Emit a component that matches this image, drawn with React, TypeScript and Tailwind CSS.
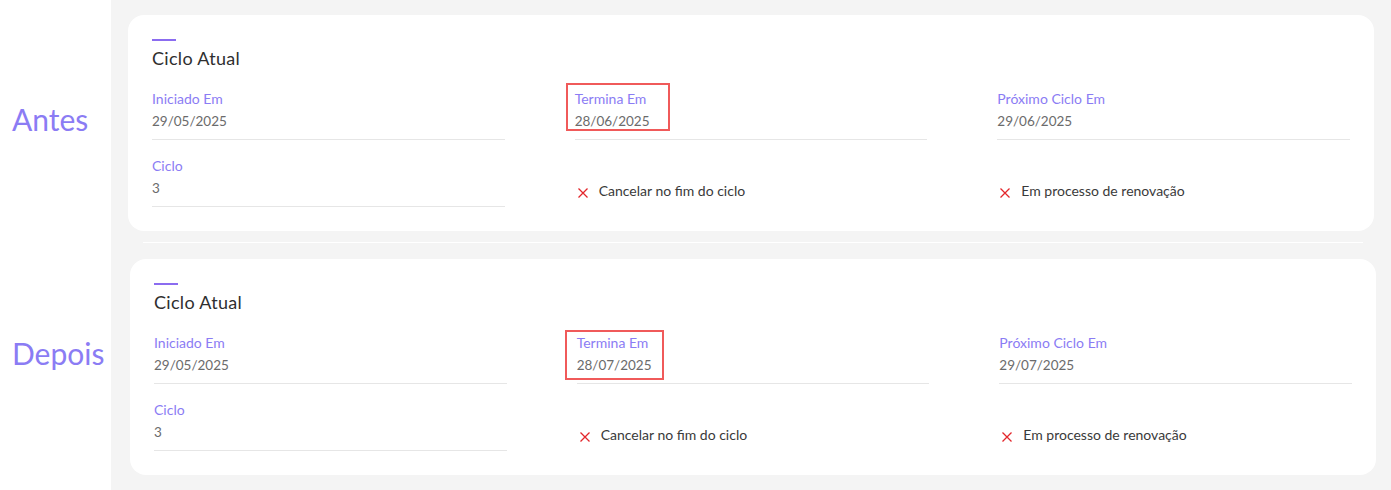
import { FC, ReactNode } from 'react'

const font = { fontFamily: 'Lato, "Open Sans", sans-serif' }

type Box = { left: number; top: number; width: number; height: number }

const Field: FC<{ label: string; value: string; box?: Box }> = ({ label, value, box }) => (
  <div className="relative border-b border-[#e6e6e6] pb-[9px]">
    <div className="text-[14px] leading-[18px] text-[#8b7cf4]">{label}</div>
    <div className="mt-[4px] text-[13.5px] leading-[18px] text-[#6b6b6b]">{value}</div>
    {box && (
      <div
        className="absolute border-2 border-[#f05a5a]"
        style={{ left: box.left, top: box.top, width: box.width, height: box.height }}
      />
    )}
  </div>
)

const Flag: FC<{ children: ReactNode }> = ({ children }) => (
  <div className="flex items-end pb-[6px]">
    <div className="ml-[3px] flex items-center gap-[11px] text-[14px] leading-[20px] text-[#3a3a3a]">
      <svg width="10" height="10" viewBox="0 0 10 10" className="mt-[3px] shrink-0">
        <path d="M0.5 0.5 L9.5 9.5 M9.5 0.5 L0.5 9.5" stroke="#e3262b" strokeWidth="1.3" />
      </svg>
      <span>{children}</span>
    </div>
  </div>
)

const CycleCard: FC<{ end: string; next: string; box: Box; className: string }> = ({
  end,
  next,
  box,
  className,
}) => (
  <div className={`rounded-2xl bg-white px-6 pt-6 pb-6 ${className}`}>
    <div className="h-[2px] w-6 bg-[#8b6cf0]" />
    <h3 className="mt-[5px] text-[18px] leading-6 tracking-[0.3px] text-[#2f2f2f]">Ciclo Atual</h3>
    <div className="mt-[20px] grid grid-cols-3 gap-x-[70px] gap-y-[17px]">
      <Field label="Iniciado Em" value="29/05/2025" />
      <Field label="Termina Em" value={end} box={box} />
      <Field label="Próximo Ciclo Em" value={next} />
      <Field label="Ciclo" value="3" />
      <Flag>Cancelar no fim do ciclo</Flag>
      <Flag>Em processo de renovação</Flag>
    </div>
  </div>
)

export default function App() {
  return (
    <div className="flex h-[490px] w-[1391px] overflow-hidden bg-white" style={font}>
      {/* Left: labels */}
      <div className="flex w-[111px] shrink-0 flex-col pl-3 text-[30px] leading-[36px] text-[#8b7cf4]">
        <div className="pt-[101px]">Antes</div>
        <div className="mt-[198px]">Depois</div>
      </div>

      {/* Right: cards */}
      <div className="flex-1 bg-[#f4f4f4] pt-[15px] pb-[15px]">
        <CycleCard
          end="28/06/2025"
          next="29/06/2025"
          box={{ left: -9, top: -7, width: 104, height: 48 }}
          className="ml-[17px] mr-[17px]"
        />
        <div className="mt-[11px] ml-[32px] mr-[28px] h-px bg-white" />
        <CycleCard
          end="28/07/2025"
          next="29/07/2025"
          box={{ left: -12, top: -4, width: 99, height: 50 }}
          className="mt-[16px] ml-[19px] mr-[15px]"
        />
      </div>
    </div>
  )
}
